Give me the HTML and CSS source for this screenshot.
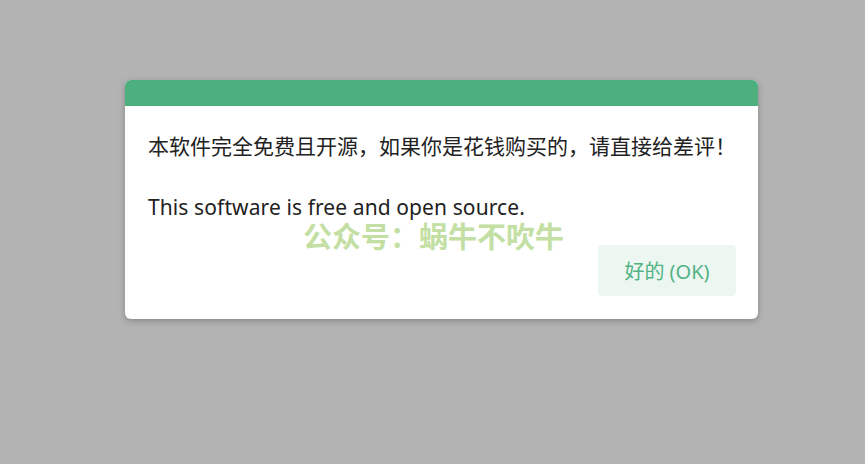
FILE: index.html
```html
<!DOCTYPE html>
<html lang="zh-CN">
<head>
    <meta charset="UTF-8">
    <title>提示</title>
    <link rel="stylesheet" href="styles.css">
</head>
<body>
    <div class="dialog">
        <div class="dialog-header"></div>
        <div class="dialog-body">
            <p class="msg">本软件完全免费且开源，如果你是花钱购买的，请直接给差评！</p>
            <p class="msg msg-en">This software is free and open source.</p>
            <div class="watermark">公众号：蜗牛不吹牛</div>
            <div class="actions">
                <button class="ok-btn">好的 (OK)</button>
            </div>
        </div>
    </div>
</body>
</html>
```

FILE: styles.css
```css
body {
    margin: 0;
    height: 464px;
    background-color: #b3b3b3;
    font-family: "Noto Sans", "Noto Sans CJK SC", sans-serif;
    overflow: hidden;
}
.dialog {
    width: 633px;
    margin: 80px 0 0 125px;
    background-color: #fff;
    border-radius: 6px;
    overflow: hidden;
    box-shadow: 0 2px 6px rgba(0, 0, 0, 0.25);
}
.dialog-header {
    height: 26px;
    background-color: #4caf7d;
}
.dialog-body {
    position: relative;
    padding: 24px 22px 23px 23px;
}
.msg {
    margin: 0;
    font-size: 21px;
    line-height: 32px;
    color: #222;
}
.msg-en {
    margin-top: 31px;
    line-height: 28px;
    letter-spacing: 0.1px;
}
.watermark {
    position: absolute;
    left: 178px;
    top: 115px;
    font-size: 29px;
    font-weight: bold;
    color: #c3dfa3;
    line-height: 29px;
    font-family: "Noto Sans CJK SC", sans-serif;
}
.actions {
    display: flex;
    justify-content: flex-end;
    margin-top: 24px;
}
.ok-btn {
    width: 138px;
    height: 51px;
    border: none;
    border-radius: 4px;
    background-color: #edf7f2;
    color: #52b283;
    font-family: "Noto Sans", "Noto Sans CJK SC", sans-serif;
    font-size: 20px;
    cursor: pointer;
}
```
